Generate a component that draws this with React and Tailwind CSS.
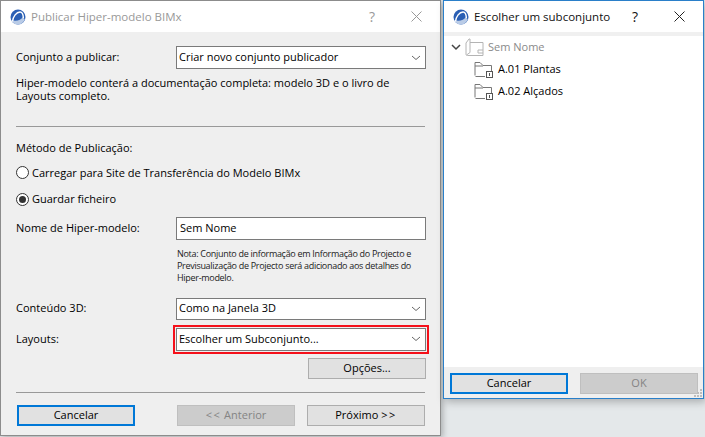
const Chevron = () => (
  <svg width="10" height="6" viewBox="0 0 10 6" className="shrink-0">
    <path d="M1 1l4 3.500L9 1" fill="none" stroke="#666" strokeWidth="1" />
  </svg>
)

const Logo = () => (
  <svg width="16" height="16" viewBox="0 0 16 16" className="shrink-0">
    <circle cx="8" cy="8" r="7.500" fill="#2a5fb4" />
    <path d="M1 11c1.500 3 4 4.500 7 4.500 3 0 5.500-2 6.800-5L13 8c-2 3-7 5-12 3z" fill="#b9cbe6" />
    <path d="M2.500 12.500C3 7.500 6.500 3 10 3c2 0 3.200 2.500 3.400 6" fill="none" stroke="#fff" strokeWidth="1.400" />
  </svg>
)

const Select = ({ text, className = '' }) => (
  <div className={`flex w-[250px] items-center justify-between border border-[#7a7a7a] bg-white pl-[2px] pr-[4px] ${className}`}>
    <span>{text}</span>
    <Chevron />
  </div>
)

const Button = ({ children, focused, disabled, className = '' }) => {
  let look = 'border border-[#adadad] bg-[#e1e1e1] text-black'
  if (focused) look = 'border-2 border-[#0078d7] bg-[#e1e1e1] text-black'
  if (disabled) look = 'border border-[#bfbfbf] bg-[#cccccc] text-[#848484]'
  return (
    <div className={`flex h-[21px] w-[118px] items-center justify-center ${look} ${className}`}>{children}</div>
  )
}

const Radio = ({ checked, label }) => (
  <div className="flex items-center gap-[3px]">
    <span className="flex h-[13px] w-[13px] items-center justify-center rounded-full border border-[#333] bg-white">
      {checked && <span className="h-[7px] w-[7px] rounded-full bg-[#333]" />}
    </span>
    <span>{label}</span>
  </div>
)

const TitleBar = ({ title, dim }) => (
  <div className="flex h-[31px] items-center bg-white pl-[9px]">
    <Logo />
    <span className={`ml-[5px] text-[11.5px] ${dim ? 'text-[#999]' : 'text-[#111]'}`}>{title}</span>
    <span className={`ml-auto text-[14px] ${dim ? 'text-[#999]' : 'text-[#111]'}`}>?</span>
    <svg width="11" height="11" viewBox="0 0 11 11" className="ml-[36px] mr-[18px]">
      <path d="M.5.5l10 10M10.500.5l-10 10" stroke={dim ? '#999' : '#222'} strokeWidth="1" />
    </svg>
  </div>
)

const SetIcon = () => (
  <svg width="19" height="19" viewBox="0 0 19 19" className="shrink-0">
    <path d="M5 4.500h13v13H2.500c-1 0-1.500-.5-1.500-1.500V5L4 1l1 0v13.500l-3.500 2.500M18 12h-5v3h5" fill="#fff" stroke="#b4b4b4" strokeWidth="1" />
  </svg>
)

const FolderIcon = () => (
  <svg width="19" height="17" viewBox="0 0 19 17" className="shrink-0">
    <path d="M1 14.500V1.500h5l3 3h8.500v6M1.500 15.500H11M1 5h8" fill="none" stroke="#777" strokeWidth="1" />
    <rect x="12.500" y="10.500" width="6" height="6" fill="#fff" stroke="#555" />
    <path d="M15.500 12v3" stroke="#555" />
  </svg>
)

const Publish = () => (
  <div className="h-[436px] w-[441px] shrink-0 border border-[#8c8c8c] bg-[#efefef] shadow-[2px_2px_6px_rgba(0,0,0,0.25)]">
    <TitleBar title="Publicar Hiper-modelo BIMx" dim />
    <div className="flex flex-col pl-[15px] pr-[14px]">
      <div className="mt-[14px] flex items-center justify-between">
        <span>Conjunto a publicar:</span>
        <Select text="Criar novo conjunto publicador" className="h-[23px]" />
      </div>
      <p className="mt-[7px] leading-[13px]">
        Hiper-modelo conterá a documentação completa: modelo 3D e o livro de
        <br />
        Layouts completo.
      </p>
      <div className="mr-px mt-[24px] h-px bg-[#999]" />
      <div className="mt-[13px]">Método de Publicação:</div>
      <div className="mt-[8px] flex flex-col gap-[10px]">
        <Radio label="Carregar para Site de Transferência do Modelo BIMx" />
        <Radio checked label="Guardar ficheiro" />
      </div>
      <div className="mt-[9px] flex items-center justify-between">
        <span>Nome de Hiper-modelo:</span>
        <div className="flex h-[23px] w-[250px] items-center border border-[#7a7a7a] bg-white pl-[3px]">Sem Nome</div>
      </div>
      <p className="ml-[161px] mt-[8px] whitespace-nowrap text-[9px] leading-[12px] tracking-[-0.3px] text-[#222]">
        Nota: Conjunto de informação em Informação do Projecto e
        <br />
        Previsualização de Projecto será adicionado aos detalhes do
        <br />
        Hiper-modelo.
      </p>
      <div className="mt-[14px] flex items-center justify-between">
        <span>Conteúdo 3D:</span>
        <Select text="Como na Janela 3D" className="h-[22px]" />
      </div>
      <div className="mt-[8px] flex items-center justify-between">
        <span>Layouts:</span>
        <div className="relative">
          <Select text="Escolher um Subconjunto..." className="h-[23px]" />
          <div className="absolute -inset-[3px] border-2 border-[#f5101a]" />
        </div>
      </div>
      <div className="mt-[7px] flex justify-end">
        <Button>Opções...</Button>
      </div>
      <div className="mr-px mt-[13px] h-px bg-[#999]" />
      <div className="mt-[12px] flex pl-[1px]">
        <Button focused>Cancelar</Button>
        <Button disabled className="ml-[42px]"><span className="tracking-[1.5px]">&lt;&lt;</span>&nbsp;Anterior</Button>
        <Button className="ml-[12px]">Próximo&nbsp;<span className="tracking-[1.5px]">&gt;&gt;</span></Button>
      </div>
    </div>
  </div>
)

const Subset = () => (
  <div className="relative flex h-[399px] w-[261px] shrink-0 flex-col border border-[#2a7fc9] bg-[#efefef] shadow-[2px_3px_8px_rgba(0,0,0,0.25)]">
    <TitleBar title="Escolher um subconjunto" />
    <div className="h-[4px] bg-[#f0f0f0]" />
    <div className="flex h-[331px] flex-col bg-white pl-[7px] pt-[2px]">
      <div className="flex h-[19px] items-center">
        <svg width="10" height="7" viewBox="0 0 10 7" className="shrink-0">
          <path d="M1 1l4 4 4-4" fill="none" stroke="#444" strokeWidth="1.500" />
        </svg>
        <span className="ml-[4px]"><SetIcon /></span>
        <span className="ml-[4px] text-[#8a8a8a]">Sem Nome</span>
      </div>
      <div className="mt-[3px] flex h-[19px] items-center pl-[23px]">
        <FolderIcon />
        <span className="ml-[5px]">A.01 Plantas</span>
      </div>
      <div className="mt-[3px] flex h-[19px] items-center pl-[23px]">
        <FolderIcon />
        <span className="ml-[5px]">A.02 Alçados</span>
      </div>
    </div>
    <div className="flex justify-between pl-[6px] pr-[5px] pt-[6px]">
      <Button focused>Cancelar</Button>
      <Button disabled>OK</Button>
    </div>
    <svg width="8" height="8" viewBox="0 0 8 8" className="absolute bottom-[1px] right-[1px]">
      <path d="M6 0h2v2H6zM3 3h2v2H3zM6 3h2v2H6zM0 6h2v2H0zM3 6h2v2H3zM6 6h2v2H6z" fill="#bdbdbd" />
    </svg>
  </div>
)

export default function App() {
  return (
    <div className="flex h-[437px] w-[705px] gap-[2px] overflow-hidden bg-[#e4e8ea] font-['Open_Sans',sans-serif] text-[11px] text-black">
      <Publish />
      <Subset />
    </div>
  )
}
